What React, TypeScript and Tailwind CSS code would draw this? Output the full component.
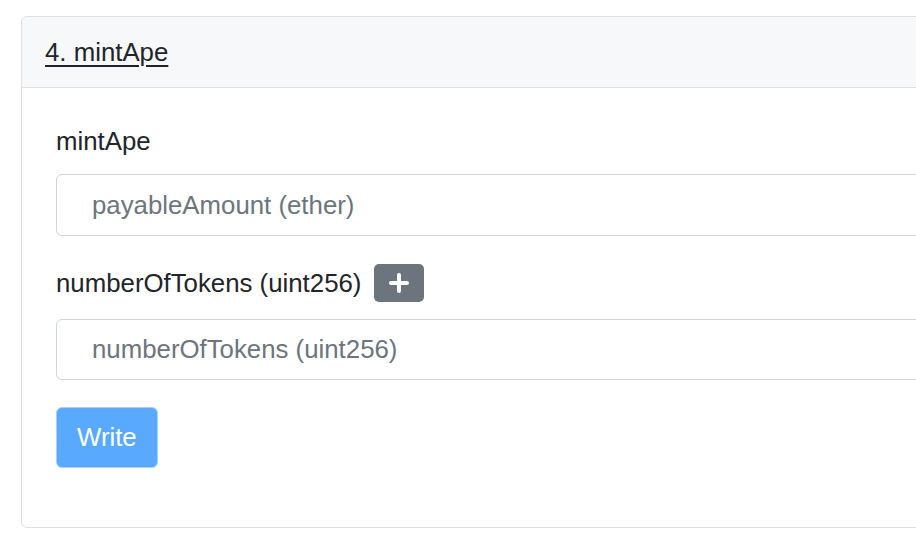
import React from "react";

export default function App() {
  return (
    <div
      className="w-[916px] h-[548px] overflow-hidden bg-white text-[#212529]"
      style={{ fontFamily: '"Liberation Sans", Arial, sans-serif' }}
    >
      <div className="pt-[16px] pl-[21px]">
        <div className="w-[960px] border border-[#dfdfdf] rounded-[6px] bg-white">
          <div className="h-[71px] bg-[#f7f8f9] border-b border-[#dfdfdf] rounded-t-[6px] flex items-center pl-[23px]">
            <span className="text-[25.8px] leading-[39px] underline underline-offset-[4px] decoration-[1.5px]">
              4. mintApe
            </span>
          </div>
          <div className="pl-[34px] pt-[34px] pb-[33px] pr-[34px]">
            <div className="mb-[26px]">
              <div className="text-[25.8px] leading-[39px] mb-[13px]">mintApe</div>
              <div className="h-[62px] border border-[#ced4da] rounded-[6px] flex items-center pl-[35px] text-[25.8px] text-[#6c757d]">
                payableAmount (ether)
              </div>
            </div>
            <div className="mb-[27px]">
              <div className="flex items-center h-[44px] mb-[14px] mt-[-1px]">
                <span className="text-[25.8px] leading-[39px]">numberOfTokens (uint256)</span>
                <span className="ml-[13px] w-[50px] h-[38px] rounded-[5px] bg-[#6c757d] flex items-center justify-center">
                  <svg width="20" height="20" viewBox="0 0 20 20">
                    <path d="M10 2v16M2 10h16" stroke="white" strokeWidth="4" strokeLinecap="round" />
                  </svg>
                </span>
              </div>
              <div className="h-[61px] border border-[#ced4da] rounded-[6px] flex items-center pl-[35px] text-[25.8px] text-[#6c757d]">
                numberOfTokens (uint256)
              </div>
            </div>
            <div className="mb-[26px]">
              <button className="h-[61px] px-[20px] rounded-[6px] bg-[#59a9ff] border border-[#a8d0ff] text-white text-[25.8px] leading-[39px]">
                Write
              </button>
            </div>
          </div>
        </div>
      </div>
    </div>
  );
}
